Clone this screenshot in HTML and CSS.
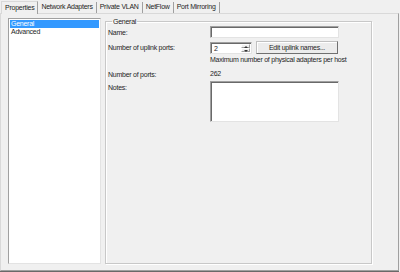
FILE: index.html
```html
<!DOCTYPE html>
<html>
<head>
<meta charset="utf-8">
<link rel="stylesheet" href="styles.css">
</head>
<body>
<div class="window">
  <div class="tabs">
    <div class="tab active">Properties</div>
    <div class="tab">Network Adapters</div>
    <div class="tab">Private VLAN</div>
    <div class="tab">NetFlow</div>
    <div class="tab">Port Mirroring</div>
  </div>
  <div class="panel">
    <div class="list">
      <div class="item sel">General</div>
      <div class="item">Advanced</div>
    </div>
    <fieldset class="group">
      <legend>General</legend>
      <div class="row r-name">
        <span class="label">Name:</span>
        <span class="input name"></span>
      </div>
      <div class="row r-uplink">
        <span class="label">Number of uplink ports:</span>
        <span class="spin"><span class="val">2</span><span class="arrows"><span class="up"></span><span class="down"></span></span></span>
        <span class="btn">Edit uplink names...</span>
      </div>
      <div class="row r-max">
        <span class="label"></span>
        <span class="note">Maximum number of physical adapters per host</span>
      </div>
      <div class="row r-ports">
        <span class="label">Number of ports:</span>
        <span class="value">262</span>
      </div>
      <div class="row r-notes">
        <span class="label">Notes:</span>
        <span class="input area"></span>
      </div>
    </fieldset>
  </div>
</div>
</body>
</html>
```
FILE: styles.css
```css
* { box-sizing: border-box; }
html, body { margin: 0; padding: 0; background: #f0f0f0; }
body {
  width: 400px; height: 272px; overflow: hidden;
  font-family: "Liberation Sans", Arial, sans-serif;
  font-size: 7px; color: #1e1e1e; letter-spacing: -0.25px;
}
.window { width: 400px; height: 272px; display: flex; flex-direction: column; }
.tabs { display: flex; height: 13px; padding-left: 1px; align-items: flex-end; }
.tab {
  height: 11px; line-height: 10px; padding: 0 3px;
  border-right: 1px solid #a0a0a0;
  white-space: nowrap;
}
.tab.active {
  height: 13px; line-height: 12px; padding: 0 3px;
  border: 1px solid #d9d9d9; border-bottom: none; border-right: 1px solid #a0a0a0;
  background: #f0f0f0; position: relative; top: 1px;
}
.panel {
  flex: 1; margin: 0 1px 1px 0;
  border: 1px solid #d9d9d9; border-right-color: #a0a0a0; border-bottom-color: #a0a0a0;
  box-shadow: 0 1px 0 #696969;
  display: flex; padding: 4px 26px 6px 7px; gap: 4px;
}
.list {
  width: 93px; background: #fff;
  border: 1px solid #a0a0a0; border-right-color: #e3e3e3; border-bottom-color: #e3e3e3;
  padding: 1px;
}
.item { height: 8px; line-height: 8px; padding-left: 1px; white-space: nowrap; }
.item.sel { background: #3399ff; color: #fff; width: 89px; }
.group {
  flex: 1; margin: 0; padding: 0 0 0 2px;
  border: 1px solid #c8c8c8; border-radius: 0;
  box-shadow: inset 1px 1px 0 #fff, 1px 1px 0 #fff;
}
legend { padding: 0 1px; margin-left: 4px; font-size: 7px; line-height: 7px; }
.row { display: flex; align-items: center; }
.label { width: 102px; flex: none; }
.r-name { height: 12px; margin-top: 1px; }
.r-uplink { height: 13px; margin-top: 3px; }
.r-max { height: 8px; margin-top: 2px; }
.r-ports { height: 8px; margin-top: 6px; }
.r-notes { align-items: flex-start; margin-top: 3px; }
.r-notes .label { margin-top: 3px; }
.input {
  display: block; background: #fff;
  border: 1px solid #a0a0a0; border-right-color: #e3e3e3; border-bottom-color: #e3e3e3;
  box-shadow: inset 1px 1px 0 #696969;
}
.name { width: 129px; height: 12px; }
.area { width: 129px; height: 41px; }
.spin {
  display: flex; width: 42px; height: 12px; background: #fff;
  border: 1px solid #a0a0a0; border-right-color: #e3e3e3; border-bottom-color: #e3e3e3;
  box-shadow: inset 1px 1px 0 #696969;
}
.val { flex: 1; padding: 1px 0 0 3px; line-height: 9px; }
.arrows { width: 9px; display: flex; flex-direction: column; background: #f0f0f0; margin: 1px 1px 1px 0; }
.arrows span { flex: 1; border: 1px solid #fff; border-right-color: #a0a0a0; border-bottom-color: #a0a0a0; position: relative; }
.arrows .up::after, .arrows .down::after {
  content: ""; position: absolute; left: 2px; width: 0; height: 0;
  border-left: 2px solid transparent; border-right: 2px solid transparent;
}
.arrows .up::after { top: 1px; border-bottom: 2px solid #333; }
.arrows .down::after { top: 1px; border-top: 2px solid #333; }
.btn {
  margin-left: 4px; width: 82px; height: 13px; line-height: 11px; text-align: center;
  border: 1px solid #c0c0c0; border-right-color: #707070; border-bottom-color: #707070;
  box-shadow: inset 1px 1px 0 #fff;
  background: #ececec;
}
.note, .value { line-height: 8px; white-space: nowrap; }
```
